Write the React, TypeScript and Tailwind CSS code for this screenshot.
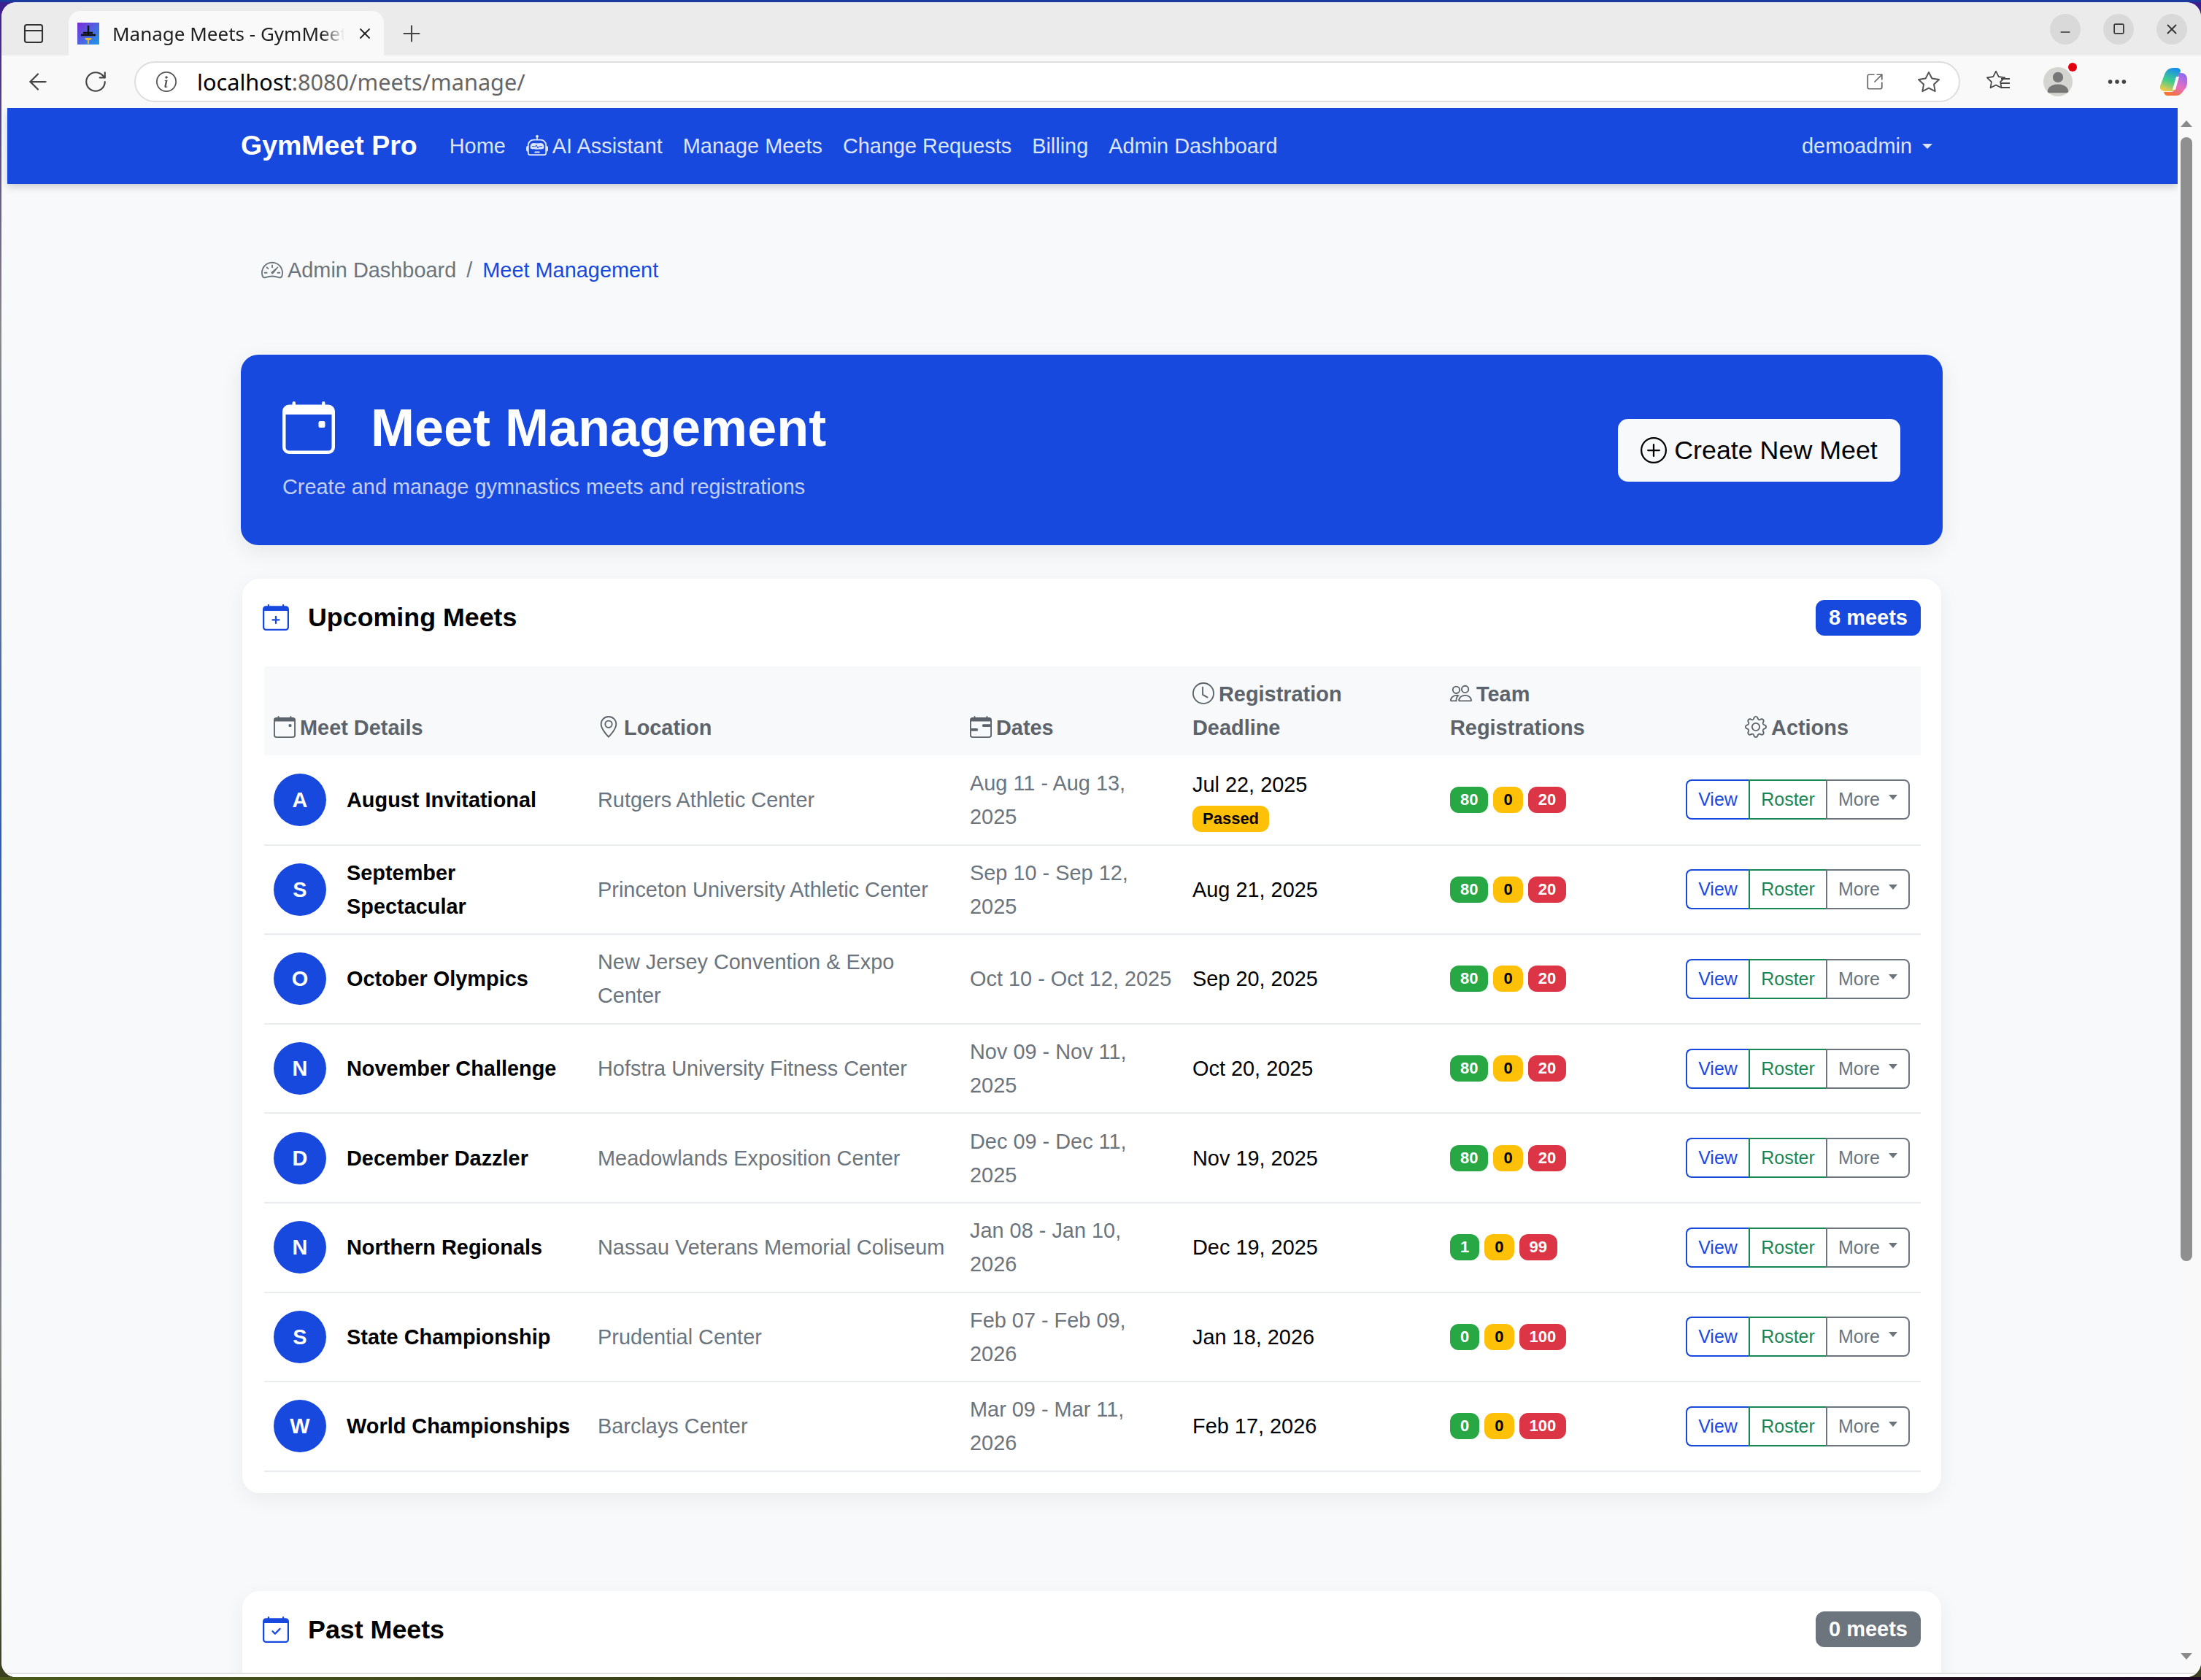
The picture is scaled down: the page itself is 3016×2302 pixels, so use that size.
import { BsCalendarEvent, BsCalendarPlus, BsCalendarCheck, BsCalendarRange, BsGeoAlt, BsClock, BsPeople, BsGear, BsSpeedometer2, BsRobot, BsPlusCircle, BsInfoCircle, BsStar, BsThreeDots, BsPersonFill } from 'react-icons/bs';
import { ArrowLeft, RotateCw, Plus, X, Minus, Square, PanelTop, SquareArrowOutUpRight } from 'lucide-react';

type Meet = {
  name: string;
  location: string;
  dates: string;
  deadline: string;
  passed?: boolean;
  counts: [number, number, number];
};

const MEETS: Meet[] = [
  { name: 'August Invitational', location: 'Rutgers Athletic Center', dates: 'Aug 11 - Aug 13, 2025', deadline: 'Jul 22, 2025', passed: true, counts: [80, 0, 20] },
  { name: 'September Spectacular', location: 'Princeton University Athletic Center', dates: 'Sep 10 - Sep 12, 2025', deadline: 'Aug 21, 2025', counts: [80, 0, 20] },
  { name: 'October Olympics', location: 'New Jersey Convention & Expo Center', dates: 'Oct 10 - Oct 12, 2025', deadline: 'Sep 20, 2025', counts: [80, 0, 20] },
  { name: 'November Challenge', location: 'Hofstra University Fitness Center', dates: 'Nov 09 - Nov 11, 2025', deadline: 'Oct 20, 2025', counts: [80, 0, 20] },
  { name: 'December Dazzler', location: 'Meadowlands Exposition Center', dates: 'Dec 09 - Dec 11, 2025', deadline: 'Nov 19, 2025', counts: [80, 0, 20] },
  { name: 'Northern Regionals', location: 'Nassau Veterans Memorial Coliseum', dates: 'Jan 08 - Jan 10, 2026', deadline: 'Dec 19, 2025', counts: [1, 0, 99] },
  { name: 'State Championship', location: 'Prudential Center', dates: 'Feb 07 - Feb 09, 2026', deadline: 'Jan 18, 2026', counts: [0, 0, 100] },
  { name: 'World Championships', location: 'Barclays Center', dates: 'Mar 09 - Mar 11, 2026', deadline: 'Feb 17, 2026', counts: [0, 0, 100] },
];

const NAV_LINKS = ['Manage Meets', 'Change Requests', 'Billing', 'Admin Dashboard'];

function BrowserChrome() {
  return (
    <div className="shrink-0 font-['Noto_Sans',sans-serif]">
      {/* Tab strip */}
      <div className="flex h-[73px] items-end rounded-t-[20px] bg-[#ebebeb] pl-[28px] pr-[19px]">
        <div className="flex h-[61px] items-center">
          <PanelTop className="h-[32px] w-[32px] text-[#333]" strokeWidth={1.6} />
        </div>
        <div className="ml-[32px] flex h-[61px] w-[432px] items-center rounded-t-[16px] bg-[#f9f9f9] pl-[12px] pr-[14px]">
          <svg viewBox="0 0 30 30" className="h-[30px] w-[30px] shrink-0">
            <defs>
              <linearGradient id="fav" x1="0" y1="0" x2="1" y2="1">
                <stop offset="0" stopColor="#7c2bd9" />
                <stop offset="1" stopColor="#1e9be8" />
              </linearGradient>
            </defs>
            <rect width="30" height="30" fill="url(#fav)" />
            <path d="M15 4v13M8 14h13M5 17h20" stroke="#111" strokeWidth="2.4" fill="none" />
            <path d="M10 21h10l-2 3h-6zM14 24h2v5h-2z" fill="#e2b93b" />
          </svg>
          <span className="ml-[18px] w-[318px] whitespace-nowrap text-[26px] leading-[34px] text-[#1f1f1f] [mask-image:linear-gradient(to_right,black_90%,transparent)]">Manage Meets - GymMeet</span>
          <X className="ml-auto h-[24px] w-[24px] text-[#222]" strokeWidth={1.8} />
        </div>
        <div className="ml-[20px] flex h-[61px] items-center">
          <Plus className="h-[36px] w-[36px] text-[#444]" strokeWidth={1.4} />
        </div>
        <div className="ml-auto flex h-[73px] items-center gap-[31px]">
          <span className="flex h-[42px] w-[42px] items-center justify-center rounded-full bg-[#d9d9d9]"><Minus className="h-[20px] w-[20px] translate-y-[4px] text-[#333]" strokeWidth={2} /></span>
          <span className="flex h-[42px] w-[42px] items-center justify-center rounded-full bg-[#d9d9d9]"><Square className="h-[17px] w-[17px] text-[#333]" strokeWidth={2.4} /></span>
          <span className="flex h-[42px] w-[42px] items-center justify-center rounded-full bg-[#d9d9d9]"><X className="h-[22px] w-[22px] text-[#333]" strokeWidth={2} /></span>
        </div>
      </div>
      {/* Address bar */}
      <div className="flex h-[72px] items-center bg-[#f9f9f9] pl-[32px] pr-[16px]">
        <ArrowLeft className="h-[36px] w-[36px] text-[#444]" strokeWidth={1.5} />
        <RotateCw className="ml-[44px] h-[34px] w-[34px] text-[#444]" strokeWidth={1.5} />
        <div className="ml-[36px] flex h-[56px] w-[2502px] items-center rounded-full border-2 border-[#dedede] bg-white pl-[28px] pr-[26px]">
          <BsInfoCircle className="h-[28px] w-[28px] text-[#555]" />
          <span className="ml-[28px] text-[30.7px] leading-[36px] text-black">localhost<span className="text-[#666]">:8080/meets/manage/</span></span>
          <SquareArrowOutUpRight className="ml-auto h-[26px] w-[26px] text-[#666]" strokeWidth={1.6} />
          <BsStar className="ml-[46px] h-[30px] w-[30px] text-[#555]" />
        </div>
        <div className="relative ml-[36px] h-[32px] w-[32px]">
          <BsStar className="h-[26px] w-[26px] text-[#444]" />
          <span className="absolute right-0 top-[11px] h-[2px] w-[12px] bg-[#444]" />
          <span className="absolute right-0 top-[17px] h-[2px] w-[12px] bg-[#444]" />
          <span className="absolute right-0 top-[23px] h-[2px] w-[12px] bg-[#444]" />
        </div>
        <div className="relative ml-[46px] flex h-[40px] w-[40px] items-end justify-center overflow-visible rounded-full bg-[#d4d4d0]">
          <BsPersonFill className="h-[38px] w-[38px] text-[#777]" />
          <span className="absolute right-[-6px] top-[-6px] h-[12px] w-[12px] rounded-full bg-[#e3000f]" />
        </div>
        <BsThreeDots className="ml-[46px] h-[30px] w-[30px] text-[#444]" />
        <svg viewBox="0 0 40 40" className="ml-[42px] h-[40px] w-[40px]">
          <defs>
            <linearGradient id="cpA" x1="0.6" y1="0" x2="0.3" y2="1">
              <stop offset="0" stopColor="#1a8fe8" />
              <stop offset="0.55" stopColor="#3fce8e" />
              <stop offset="1" stopColor="#f7c948" />
            </linearGradient>
            <linearGradient id="cpB" x1="0.7" y1="0" x2="0.3" y2="1">
              <stop offset="0" stopColor="#8f6cf0" />
              <stop offset="0.55" stopColor="#e66fc0" />
              <stop offset="1" stopColor="#f5732e" />
            </linearGradient>
          </defs>
          <path d="M13 3Q16 1 20 1H25Q29 1 30 5L24 28Q22 33 18 33H8Q1 33 2 26L8 10Q10 5 13 3Z" fill="url(#cpA)" />
          <path d="M27 8H31Q38 8 39 16V21Q39 28 35 31Q31 38 25 39H12Q8 39 7 34H17Q21 34 22 30L26 14Z" fill="url(#cpB)" />
          <path d="M24 13h4l-5 18h-4z" fill="#fff" />
        </svg>
      </div>
    </div>
  );
}

function TopNav() {
  return (
    <nav className="relative z-10 flex h-[104px] shrink-0 items-center bg-[#1749df] pl-[320px] pr-[336px] shadow-[0_4px_10px_rgba(0,0,0,0.18)]">
      <span className="text-[37.5px] font-bold leading-none text-white">GymMeet Pro</span>
      <div className="ml-[44px] flex items-center gap-[28px] text-[#dbe4fb]">
        <span>Home</span>
        <span className="flex items-center gap-[6px]"><BsRobot className="h-[30px] w-[30px]" />AI Assistant</span>
        {NAV_LINKS.map(link => (
          <span key={link}>{link}</span>
        ))}
      </div>
      <div className="ml-auto flex items-center gap-[14px] text-[#dbe4fb]">
        <span>demoadmin</span>
        <span className="h-0 w-0 border-x-[7px] border-t-[7px] border-x-transparent border-t-[#dbe4fb]" />
      </div>
    </nav>
  );
}

function CountPills({ counts }: { counts: [number, number, number] }) {
  return (
    <div className="flex items-center gap-[7px] text-[22px] font-bold leading-none">
      <span className="rounded-[12px] bg-[#28a745] px-[14px] py-[7px] text-white">{counts[0]}</span>
      <span className="rounded-[12px] bg-[#ffc107] px-[14px] py-[7px] text-black">{counts[1]}</span>
      <span className="rounded-[12px] bg-[#dc3545] px-[14px] py-[7px] text-white">{counts[2]}</span>
    </div>
  );
}

function ActionGroup() {
  return (
    <div className="flex h-[55px] text-[25px] leading-none">
      <span className="flex w-[86px] items-center justify-center rounded-l-[8px] border-2 border-r-0 border-[#1749df] text-[#1749df]">View</span>
      <span className="flex w-[106px] items-center justify-center border-2 border-r-0 border-[#198754] text-[#198754]">Roster</span>
      <span className="flex w-[115px] items-center justify-center gap-[12px] rounded-r-[8px] border-2 border-[#6c757d] text-[#6c757d]">
        More
        <span className="h-0 w-0 -translate-y-[3px] border-x-[6px] border-t-[7px] border-x-transparent border-t-[#6c757d]" />
      </span>
    </div>
  );
}

function MeetRow({ meet }: { meet: Meet }) {
  return (
    <tr className="h-[122.6px] border-b-2 border-[#e9ecef] align-middle">
      <td className="pl-[13px] pr-[15px]">
        <div className="flex items-center gap-[28px]">
          <span className="flex h-[72px] w-[72px] shrink-0 items-center justify-center rounded-full bg-[#1749df] font-bold text-white">{meet.name[0]}</span>
          <span className="font-bold text-black">{meet.name}</span>
        </div>
      </td>
      <td className="px-[15px] text-[#6c757d]">{meet.location}</td>
      <td className="pl-[15px] pr-[12px] text-[#6c757d]">{meet.dates}</td>
      <td className="px-[15px] text-black">
        {meet.deadline}
        {meet.passed && (
          <div className="mt-[6px] leading-none">
            <span className="inline-block rounded-[12px] bg-[#ffc107] px-[14px] py-[7px] text-[22px] font-bold leading-none text-black">Passed</span>
          </div>
        )}
      </td>
      <td className="px-[15px]"><CountPills counts={meet.counts} /></td>
      <td className="px-[15px]"><div className="flex justify-end"><ActionGroup /></div></td>
    </tr>
  );
}

function Upcoming() {
  return (
    <section className="mx-[2px] mt-[46px] rounded-[24px] bg-white pb-[29px] pl-[30px] pr-[28px] pt-[28px] shadow-[0_8px_30px_rgba(0,0,0,0.06)]">
      <div className="flex h-[50px] items-center justify-between">
        <h2 className="-ml-[2px] flex items-center gap-[26px] text-[35.8px] font-bold leading-none text-black">
          <BsCalendarPlus className="h-[36px] w-[36px] text-[#1749df]" />
          <span className="pt-[2px]">Upcoming Meets</span>
        </h2>
        <span className="rounded-[12px] bg-[#1749df] px-[18px] py-[10px] text-[29px] font-bold leading-[29px] text-white">8 meets</span>
      </div>
      <table className="mt-[42px] w-full table-fixed border-collapse">
        <colgroup>
          <col className="w-[442px]" />
          <col className="w-[510px]" />
          <col className="w-[305px]" />
          <col className="w-[353px]" />
          <col className="w-[320px]" />
          <col />
        </colgroup>
        <thead>
          <tr className="h-[122px] bg-[#f8f9fa] align-bottom text-left font-bold text-[#5c636a]">
            <th className="pb-[15px] pl-[13px] pr-[15px]"><BsCalendarEvent className="mr-[6px] inline h-[30px] w-[30px] align-[-4px]" />Meet Details</th>
            <th className="px-[15px] pb-[15px]"><BsGeoAlt className="mr-[6px] inline h-[30px] w-[30px] align-[-4px]" />Location</th>
            <th className="px-[15px] pb-[15px]"><BsCalendarRange className="mr-[6px] inline h-[30px] w-[30px] align-[-4px]" />Dates</th>
            <th className="px-[15px] pb-[15px]"><BsClock className="mr-[6px] inline h-[30px] w-[30px] align-[-4px]" />Registration Deadline</th>
            <th className="px-[15px] pb-[15px]"><BsPeople className="mr-[6px] inline h-[30px] w-[30px] align-[-4px]" />Team Registrations</th>
            <th className="px-[15px] pb-[15px] text-center"><BsGear className="mr-[6px] inline h-[30px] w-[30px] align-[-4px]" />Actions</th>
          </tr>
        </thead>
        <tbody>
          {MEETS.map(meet => (
            <MeetRow key={meet.name} meet={meet} />
          ))}
        </tbody>
      </table>
    </section>
  );
}

function PastMeets() {
  return (
    <section className="mx-[2px] mt-[134px] rounded-t-[24px] bg-white pb-[100px] pl-[30px] pr-[28px] pt-[28px] shadow-[0_8px_30px_rgba(0,0,0,0.06)]">
      <div className="flex h-[50px] items-center justify-between">
        <h2 className="-ml-[2px] flex items-center gap-[26px] text-[35.8px] font-bold leading-none text-black">
          <BsCalendarCheck className="h-[36px] w-[36px] text-[#1749df]" />
          <span className="pt-[2px]">Past Meets</span>
        </h2>
        <span className="rounded-[12px] bg-[#6c757d] px-[18px] py-[10px] text-[29px] font-bold leading-[29px] text-white">0 meets</span>
      </div>
    </section>
  );
}

export default function App() {
  return (
    <div className="flex h-[2302px] w-[3016px] flex-col overflow-hidden bg-[linear-gradient(to_bottom,#3b1d8f,#8a8a8a_20%,#2a5cc0_50%,#8a8a8a_80%,#3a3f1e)] font-['Liberation_Sans',Arial,sans-serif] text-[28.9px] leading-[46px]">
      <div className="h-[3px] shrink-0 bg-[#1b3a9e]" />
      <div className="ml-[2px] flex min-h-0 flex-1 flex-col overflow-hidden rounded-[20px] bg-[#f9f9f9]">
        <BrowserChrome />
        <div className="flex min-h-0 flex-1">
          <div className="flex min-w-0 flex-1 flex-col overflow-hidden bg-[#f8f9fa] pl-[8px]">
            <TopNav />
            <main className="min-h-0 overflow-hidden pl-[320px] pr-[322px]">
              <div className="mt-[95px] flex items-center pl-[28px] text-[#6c757d]">
                <BsSpeedometer2 className="mr-[6px] h-[30px] w-[30px]" />
                <span>Admin Dashboard</span>
                <span className="mx-[14px]">/</span>
                <span className="text-[#1749df]">Meet Management</span>
              </div>
              <div className="mt-[93px] flex h-[261px] items-center justify-between rounded-[24px] bg-[#1749df] pl-[57px] pr-[58px] shadow-[0_8px_30px_rgba(0,0,0,0.08)]">
                <div>
                  <h1 className="flex items-center gap-[49px] text-[72px] font-bold leading-[84px] text-white">
                    <BsCalendarEvent className="h-[72px] w-[72px]" />
                    Meet Management
                  </h1>
                  <p className="mt-[16px] text-[#c3d0f6]">Create and manage gymnastics meets and registrations</p>
                </div>
                <button className="flex h-[86px] w-[387px] items-center justify-center gap-[10px] rounded-[14px] bg-[#f8f9fa] text-[35.8px] text-black">
                  <BsPlusCircle className="h-[36px] w-[36px]" />
                  Create New Meet
                </button>
              </div>
              <Upcoming />
              <PastMeets />
            </main>
          </div>
          {/* Scrollbar */}
          <div className="flex w-[32px] shrink-0 flex-col items-center bg-[#f9f9f9] pb-[18px] pr-[8px] pt-[17px]">
            <span className="h-0 w-0 border-x-[8px] border-b-[9px] border-x-transparent border-b-[#8a8a8a]" />
            <span className="mt-[14px] h-[1540px] w-[16px] rounded-full bg-[#8f8f8f]" />
            <span className="mt-auto h-0 w-0 border-x-[8px] border-t-[9px] border-x-transparent border-t-[#8a8a8a]" />
          </div>
        </div>
        <div className="h-[6px] shrink-0 border-t-2 border-[#e0e0e0] bg-white" />
      </div>
      <div className="h-[4px] shrink-0 bg-[linear-gradient(to_right,#4a5a1c,#2a2a14_60%,#1f0a24)]" />
    </div>
  );
}
